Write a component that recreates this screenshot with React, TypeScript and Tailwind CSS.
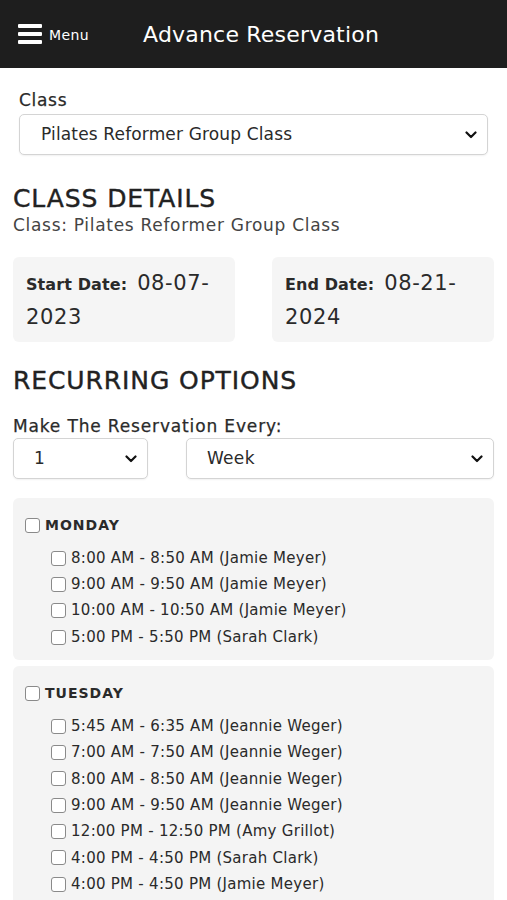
import React from "react";

const Chevron = () => (
  <svg width="12" height="8" viewBox="0 0 12 8" fill="none">
    <path d="M1.5 1.5 L6 6 L10.5 1.5" stroke="#111" strokeWidth="2.2" strokeLinecap="round" strokeLinejoin="round" />
  </svg>
);

const Box = () => (
  <span className="inline-block w-[15px] h-[15px] shrink-0 rounded-[3px] border border-[#8a8a8a] bg-white" />
);

const Select = ({ value, className }: { value: string; className: string }) => (
  <div
    className={`flex items-center justify-between h-[41px] rounded-[5px] border border-[#d4d4d4] bg-white pr-[10px] shadow-[0_1px_2px_rgba(0,0,0,0.06)] ${className}`}
  >
    <span>{value}</span>
    <Chevron />
  </div>
);

const days = [
  {
    name: "MONDAY",
    slots: [
      "8:00 AM - 8:50 AM (Jamie Meyer)",
      "9:00 AM - 9:50 AM (Jamie Meyer)",
      "10:00 AM - 10:50 AM (Jamie Meyer)",
      "5:00 PM - 5:50 PM (Sarah Clark)",
    ],
  },
  {
    name: "TUESDAY",
    slots: [
      "5:45 AM - 6:35 AM (Jeannie Weger)",
      "7:00 AM - 7:50 AM (Jeannie Weger)",
      "8:00 AM - 8:50 AM (Jeannie Weger)",
      "9:00 AM - 9:50 AM (Jeannie Weger)",
      "12:00 PM - 12:50 PM (Amy Grillot)",
      "4:00 PM - 4:50 PM (Sarah Clark)",
      "4:00 PM - 4:50 PM (Jamie Meyer)",
    ],
  },
];

export default function App() {
  return (
    <div className="w-[507px] h-[900px] overflow-hidden bg-white text-[#2a2a2a] font-['DejaVu_Sans',sans-serif]">
      {/* header */}
      <div className="h-[68px] bg-[#1e1e1e] flex items-center pl-[18px] text-white">
        <div className="flex flex-col gap-[4px] w-[24px]">
          <span className="h-[4px] bg-white rounded-[1px]" />
          <span className="h-[4px] bg-white rounded-[1px]" />
          <span className="h-[4px] bg-white rounded-[1px]" />
        </div>
        <span className="ml-[7px] mt-[3px] text-[14px] tracking-[0.4px]">Menu</span>
        <span className="ml-[54px] text-[22px] tracking-[0.2px]">Advance Reservation</span>
      </div>

      <div className="px-[19px] pt-[21px]">
        <div className="text-[17px] leading-[22px] tracking-[0.7px] [-webkit-text-stroke:0.25px]">Class</div>
        <Select value="Pilates Reformer Group Class" className="mt-[3px] w-[469px] pl-[21px] text-[17px] tracking-[0.15px]" />
      </div>

      <div className="px-[13px]">
        <h2 className="mt-[29px] text-[25px] leading-[30px] tracking-[0.9px] text-[#222] [-webkit-text-stroke:0.4px]">CLASS DETAILS</h2>
        <div className="text-[17px] leading-[22px] tracking-[0.7px] text-[#444]">Class: Pilates Reformer Group Class</div>

        <div className="mt-[21px] flex justify-between">
          {[
            ["Start Date:", "08-07-", "2023"],
            ["End Date:", "08-21-", "2024"],
          ].map(([label, a, b]) => (
            <div key={label} className="w-[222px] h-[85px] rounded-[6px] bg-[#f5f5f5] px-[13px] pt-[10px]">
              <div className="leading-[32px]">
                <span className="text-[16px] font-semibold tracking-[0.1px]">{label}</span>
                <span className="ml-[10px] text-[21px] tracking-[0.6px]">{a}</span>
              </div>
              <div className="text-[21px] leading-[32px] tracking-[0.6px]">{b}</div>
            </div>
          ))}
        </div>

        <h2 className="mt-[24px] text-[25px] leading-[30px] tracking-[0.9px] text-[#222] [-webkit-text-stroke:0.4px]">RECURRING OPTIONS</h2>
        <div className="mt-[19px] text-[17px] leading-[22px] tracking-[0.85px] [-webkit-text-stroke:0.25px]">Make The Reservation Every:</div>
        <div className="mt-[1px] flex justify-between">
          <Select value="1" className="w-[135px] pl-[20px] text-[17px]" />
          <Select value="Week" className="w-[308px] pl-[20px] text-[17px] tracking-[0.3px]" />
        </div>

        <div className="mt-[19px] flex flex-col gap-[6px]">
          {days.map((d) => (
            <div key={d.name} className="rounded-[6px] bg-[#f4f4f4] pl-[12px] pt-[16px] pb-[10px]">
              <div className="flex items-center gap-[5px] h-[22px]">
                <Box />
                <span className="text-[14px] font-bold tracking-[1px]">{d.name}</span>
              </div>
              <div className="mt-[9px] pl-[26px]">
                {d.slots.map((s) => (
                  <div key={s} className="flex items-center gap-[5px] h-[26.3px] text-[15px] tracking-[0.27px]">
                    <Box />
                    <span>{s}</span>
                  </div>
                ))}
              </div>
            </div>
          ))}
        </div>
      </div>
    </div>
  );
}
